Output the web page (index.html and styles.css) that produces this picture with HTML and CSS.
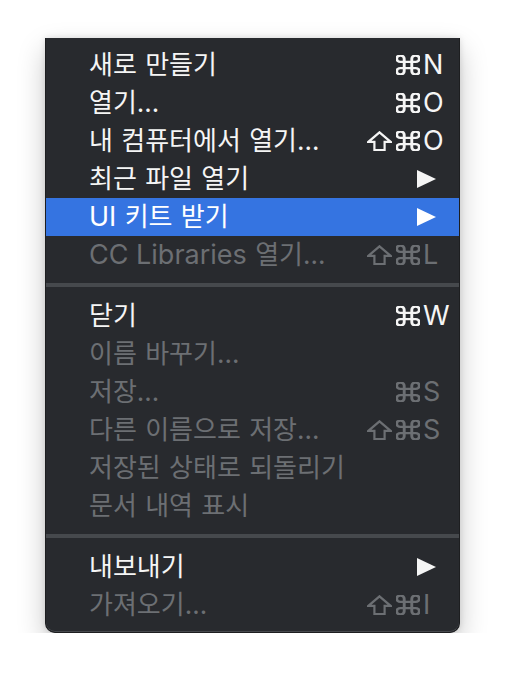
FILE: index.html
```html
<!DOCTYPE html>
<html lang="ko">
<head>
<meta charset="utf-8">
<link rel="stylesheet" href="styles.css">
</head>
<body>
<svg width="0" height="0" class="defs">
  <defs>
    <symbol id="cmd" viewBox="2.5 2.5 19 19" preserveAspectRatio="none">
      <path d="M15 6v12a3 3 0 1 0 3-3H6a3 3 0 1 0 3 3V6a3 3 0 1 0-3 3h12a3 3 0 1 0-3-3" fill="none" stroke="currentColor" stroke-width="2.3" stroke-linejoin="round"/>
    </symbol>
    <symbol id="shift" viewBox="0 0 25 20">
      <path d="M12.5 1.3 L23.6 10.8 H17.6 V19 H7.4 V10.8 H1.4 Z" fill="none" stroke="currentColor" stroke-width="2.2" stroke-linejoin="miter"/>
    </symbol>
    <symbol id="arrow" viewBox="0 0 19 18">
      <path d="M0 0 L19 9 L0 18 Z" fill="currentColor"/>
    </symbol>
  </defs>
</svg>
<div class="menu">
  <div class="item"><span class="label">새로 만들기</span><span class="mods"><svg class="ic cmd"><use href="#cmd"/></svg></span><span class="key">N</span></div>
  <div class="item"><span class="label">열기…</span><span class="mods"><svg class="ic cmd"><use href="#cmd"/></svg></span><span class="key">O</span></div>
  <div class="item"><span class="label">내 컴퓨터에서 열기…</span><span class="mods"><svg class="ic shift"><use href="#shift"/></svg><svg class="ic cmd"><use href="#cmd"/></svg></span><span class="key">O</span></div>
  <div class="item"><span class="label">최근 파일 열기</span><span class="mods"></span><span class="key"><svg class="arrow"><use href="#arrow"/></svg></span></div>
  <div class="item active"><span class="label"><span class="lat">UI</span> 키트 받기</span><span class="mods"></span><span class="key"><svg class="arrow"><use href="#arrow"/></svg></span></div>
  <div class="item disabled"><span class="label"><span class="lat">CC Libraries</span> 열기…</span><span class="mods"><svg class="ic shift"><use href="#shift"/></svg><svg class="ic cmd"><use href="#cmd"/></svg></span><span class="key">L</span></div>
  <div class="sep"></div>
  <div class="item"><span class="label">닫기</span><span class="mods"><svg class="ic cmd"><use href="#cmd"/></svg></span><span class="key">W</span></div>
  <div class="item disabled"><span class="label">이름 바꾸기…</span><span class="mods"></span><span class="key"></span></div>
  <div class="item disabled"><span class="label">저장…</span><span class="mods"><svg class="ic cmd"><use href="#cmd"/></svg></span><span class="key">S</span></div>
  <div class="item disabled"><span class="label">다른 이름으로 저장…</span><span class="mods"><svg class="ic shift"><use href="#shift"/></svg><svg class="ic cmd"><use href="#cmd"/></svg></span><span class="key">S</span></div>
  <div class="item disabled"><span class="label">저장된 상태로 되돌리기</span><span class="mods"></span><span class="key"></span></div>
  <div class="item disabled"><span class="label">문서 내역 표시</span><span class="mods"></span><span class="key"></span></div>
  <div class="sep"></div>
  <div class="item"><span class="label">내보내기</span><span class="mods"></span><span class="key"><svg class="arrow"><use href="#arrow"/></svg></span></div>
  <div class="item disabled"><span class="label">가져오기…</span><span class="mods"><svg class="ic shift"><use href="#shift"/></svg><svg class="ic cmd"><use href="#cmd"/></svg></span><span class="key">I</span></div>
</div>
</body>
</html>
```

FILE: styles.css
```css
html, body {
  margin: 0;
  padding: 0;
  background: #ffffff;
}

.defs {
  position: absolute;
  width: 0;
  height: 0;
}

.menu {
  margin: 38px 0 0 45px;
  width: 415px;
  box-sizing: border-box;
  padding: 8px 0;
  background: #282a2e;
  border: 1px solid #1d1e20;
  border-top: none;
  border-radius: 0 0 10px 10px;
  box-shadow: inset 0 -1px 0 #46494d, 0 12px 28px rgba(0, 0, 0, 0.22), 0 0 6px rgba(0, 0, 0, 0.12);
  font-family: "Inter", "Noto Sans CJK KR", sans-serif;
  font-size: 27px;
  color: #f5f5f5;
}

.item {
  display: flex;
  align-items: center;
  height: 38px;
  padding: 0 12px 0 43px;
  white-space: nowrap;
}

.item.active {
  background: #3574e1;
  color: #ffffff;
}

.item.disabled {
  color: #6c6f73;
}

.label {
  flex: 1;
  line-height: 38px;
  font-size: 26px;
  letter-spacing: 0;
  word-spacing: 1px;
}

.lat {
  font-size: 27px;
  letter-spacing: 0;
  word-spacing: 0;
}

.mods {
  display: flex;
  align-items: center;
  gap: 4px;
  margin-right: 3px;
}

.key {
  width: 24px;
  display: flex;
  align-items: center;
  line-height: 38px;
}

.ic {
  display: block;
  height: 20px;
}

.ic.cmd {
  width: 24px;
}

.ic.shift {
  width: 25px;
}

.arrow {
  display: block;
  width: 19px;
  height: 18px;
  margin-left: -6px;
}

.sep {
  height: 4px;
  margin: 9px 0 10px;
  background: #46494d;
}
```
